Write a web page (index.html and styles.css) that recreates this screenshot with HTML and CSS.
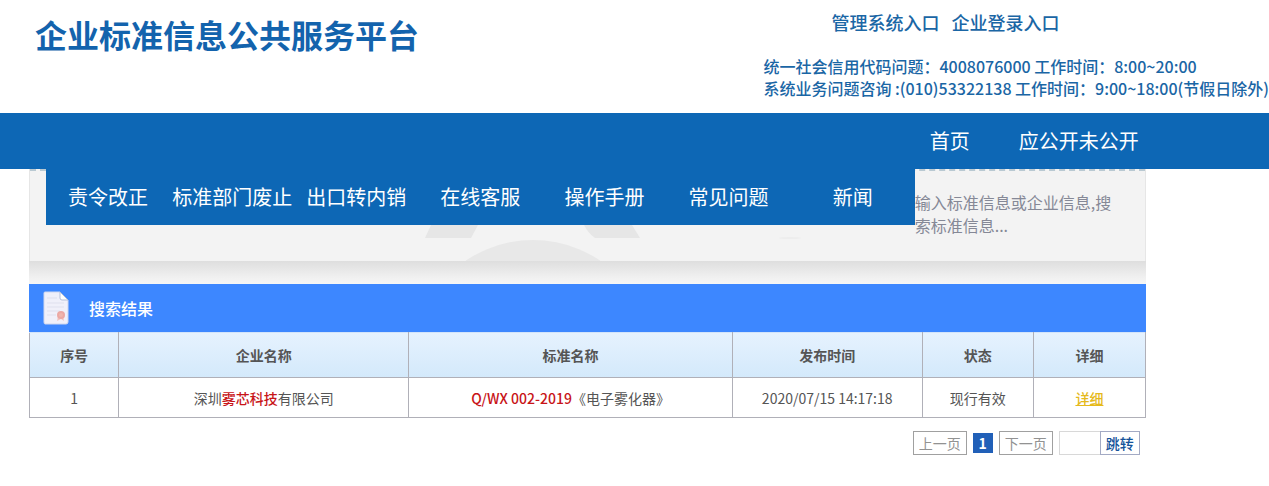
FILE: index.html
```html
<!DOCTYPE html>
<html lang="zh-CN">
<head>
    <meta charset="UTF-8">
    <meta name="viewport" content="width=device-width, initial-scale=1.0">
    <title>企业标准信息公共服务平台</title>
    <link rel="stylesheet" href="styles.css">
</head>
<body>
    <header class="header">
        <h1>企业标准信息公共服务平台</h1>
        <div class="header-right">
            <div class="entrances">
                <a href="#">管理系统入口</a>
                <a href="#">企业登录入口</a>
            </div>
            <p>统一社会信用代码问题：4008076000 工作时间：8:00~20:00</p>
            <p>系统业务问题咨询 :(010)53322138 工作时间：9:00~18:00(节假日除外)</p>
        </div>
    </header>

    <nav class="nav">
        <div class="container nav-main">
            <a href="#">首页</a>
            <a href="#">应公开未公开</a>
        </div>
    </nav>

    <main class="container">
        <div class="banner">
            <svg class="banner-art" width="380" height="36" viewBox="0 0 380 36" aria-hidden="true">
                <path d="M6 0H53L46 13H0Z" fill="#e6e6e6"/>
                <path d="M159 0H207L215 13H170Q163 8 159 0Z" fill="#e6e6e6"/>
                <circle cx="108" cy="135" r="120" fill="#e8e8e8"/>
                <ellipse cx="365" cy="13" rx="11" ry="1" fill="#ededed"/>
            </svg>
            <nav class="nav-sub">
                <a href="#">责令改正</a>
                <a href="#">标准部门废止</a>
                <a href="#">出口转内销</a>
                <a href="#">在线客服</a>
                <a href="#">操作手册</a>
                <a href="#">常见问题</a>
                <a href="#">新闻</a>
            </nav>
            <textarea class="search" rows="2" aria-label="搜索标准信息" placeholder="输入标准信息或企业信息,搜索标准信息..."></textarea>
        </div>
        <div class="banner-shadow"></div>

        <div class="result-title">
            <svg width="26" height="34" viewBox="0 0 26 34" aria-hidden="true">
                <path d="M2 1H17L25 9V31Q25 33 23 33H2Q1 33 1 31V2Q1 1 2 1Z" fill="#f0f0fa" stroke="#cfd6ee"/>
                <path d="M17 1V7Q17 9 19 9H25Z" fill="#fff" stroke="#b5bfd8"/>
                <path d="M4 7H14M4 12H21M4 16H21M4 20H17M4 24H13" stroke="#dfe0ee"/>
                <path d="M15 25L14 30L18 28L21 30L20 25Z" fill="#efc4c1"/>
                <circle cx="18" cy="24" r="4" fill="#eba8a4"/>
                <circle cx="18" cy="24" r="2" fill="#efb6ae"/>
            </svg>
            <h2>搜索结果</h2>
        </div>

        <table class="result-table">
            <thead>
                <tr>
                    <th class="col-no">序号</th>
                    <th class="col-company">企业名称</th>
                    <th class="col-standard">标准名称</th>
                    <th class="col-time">发布时间</th>
                    <th class="col-status">状态</th>
                    <th class="col-detail">详细</th>
                </tr>
            </thead>
            <tbody>
                <tr>
                    <td>1</td>
                    <td>深圳<em>雾芯科技</em>有限公司</td>
                    <td><em>Q/WX 002-2019</em>《电子雾化器》</td>
                    <td>2020/07/15 14:17:18</td>
                    <td>现行有效</td>
                    <td><a href="#" class="detail">详细</a></td>
                </tr>
            </tbody>
        </table>

        <form class="pager">
            <button type="button" class="step">上一页</button>
            <button type="button" class="current">1</button>
            <button type="button" class="step">下一页</button>
            <div class="jump">
                <input type="text" aria-label="页码">
                <button type="submit">跳转</button>
            </div>
        </form>
    </main>
</body>
</html>
```
FILE: styles.css
```css
* {
    box-sizing: border-box;
}
body {
    margin: 0;
    background-color: #fff;
    color: #555;
    font-family: "Noto Sans CJK SC", sans-serif;
    font-size: 14px;
}
h1, h2, p {
    margin: 0;
}
a {
    color: inherit;
    text-decoration: none;
}
button, input, textarea {
    font: inherit;
    margin: 0;
    border-radius: 0;
}
.container {
    width: 88%;
    margin-left: 29px;
}

/* Header */
.header {
    display: flex;
    justify-content: space-between;
    min-height: 113px;
    padding: 11px 0 12px 35px;
    color: #1a66a5;
    white-space: nowrap;
}
.header h1 {
    color: #1363ad;
    font-size: 32px;
    line-height: 46px;
    font-weight: 700;
}
.header-right {
    font-size: 16px;
    line-height: 22px;
    font-weight: 500;
}
.entrances {
    display: flex;
    gap: 12px;
    padding-left: 68px;
    margin-bottom: 22px;
    font-size: 18px;
}

/* Navigation */
.nav {
    background-color: #0d67b5;
}
.nav-main {
    display: flex;
    justify-content: flex-end;
}
.nav-main a, .nav-sub a {
    color: #fff;
    font-size: 20px;
    line-height: 56px;
    text-align: center;
    white-space: nowrap;
}
.nav-main a {
    min-width: 124px;
    padding: 0 7px;
}
.nav-sub {
    flex: 1;
    display: grid;
    grid-template-columns: repeat(7, 1fr);
    background-color: #0d67b5;
}

/* Banner */
.banner {
    position: relative;
    display: flex;
    align-items: flex-start;
    min-height: 92px;
    padding-left: 16px;
    background-color: #f3f3f3;
    border-right: 1px solid #e6e6e6;
    border-left: 1px solid #e6e6e6;
}
.banner::before {
    content: "";
    position: absolute;
    top: 0;
    left: 0;
    right: 0;
    border-top: 2px dashed #b9c9d2;
}
.banner-art {
    position: absolute;
    left: 395px;
    bottom: 0;
}
.nav-sub, .search {
    position: relative;
}
.search {
    width: 204px;
    margin: 22px 26px 0 0;
    padding: 0;
    border: none;
    background: none;
    color: #555;
    font-size: 16px;
    line-height: 23px;
    resize: none;
    overflow: hidden;
}
.search::placeholder {
    color: #858896;
}
.banner-shadow {
    height: 23px;
    background: linear-gradient(#dedede, #f0f0f0 70%, #f6f6f6);
}

/* Results */
.result-title {
    display: flex;
    align-items: center;
    gap: 20px;
    height: 48px;
    padding-left: 14px;
    background-color: #3d87ff;
    color: #fff;
}
.result-title h2 {
    font-size: 16px;
    line-height: 22px;
    font-weight: 500;
}
.result-table {
    width: 100%;
    border-collapse: collapse;
    table-layout: fixed;
    text-align: center;
}
.result-table th, .result-table td {
    padding: 0;
    border: 1px solid #b0b0b8;
    line-height: 20px;
}
.result-table th {
    height: 45px;
    border-top-color: #d3e4fa;
    font-weight: 700;
}
.result-table thead tr {
    background: linear-gradient(#e6f2fe, #d3e9fb);
}
.result-table td {
    height: 40px;
}
.result-table em {
    color: #c81418;
    font-style: normal;
    font-weight: 500;
}
.col-no { width: 8%; }
.col-company { width: 26%; }
.col-standard { width: 29%; }
.col-time { width: 17%; }
.col-status { width: 10%; }
.col-detail { width: 10%; }
.result-table .detail {
    color: #e5b91c;
    font-weight: 500;
    text-decoration: underline;
}

/* Pager */
.pager {
    display: flex;
    justify-content: flex-end;
    align-items: center;
    gap: 6px;
    padding: 13px 6px;
}
.pager button {
    height: 24px;
    padding: 0 5px;
    border: 1px solid #a0a0a0;
    background-color: #fff;
    font-size: 14px;
    line-height: 20px;
    cursor: pointer;
}
.pager .step {
    color: #929292;
}
.pager .current {
    width: 20px;
    height: 20px;
    border: none;
    background-color: #2160b8;
    color: #fff;
    font-weight: 700;
}
.jump {
    display: flex;
}
.jump input {
    width: 41px;
    height: 24px;
    border: 1px solid #d8d8d8;
    border-right: none;
}
.pager .jump button {
    border-color: #a3aac4;
    color: #14539a;
    font-weight: 500;
}
```
